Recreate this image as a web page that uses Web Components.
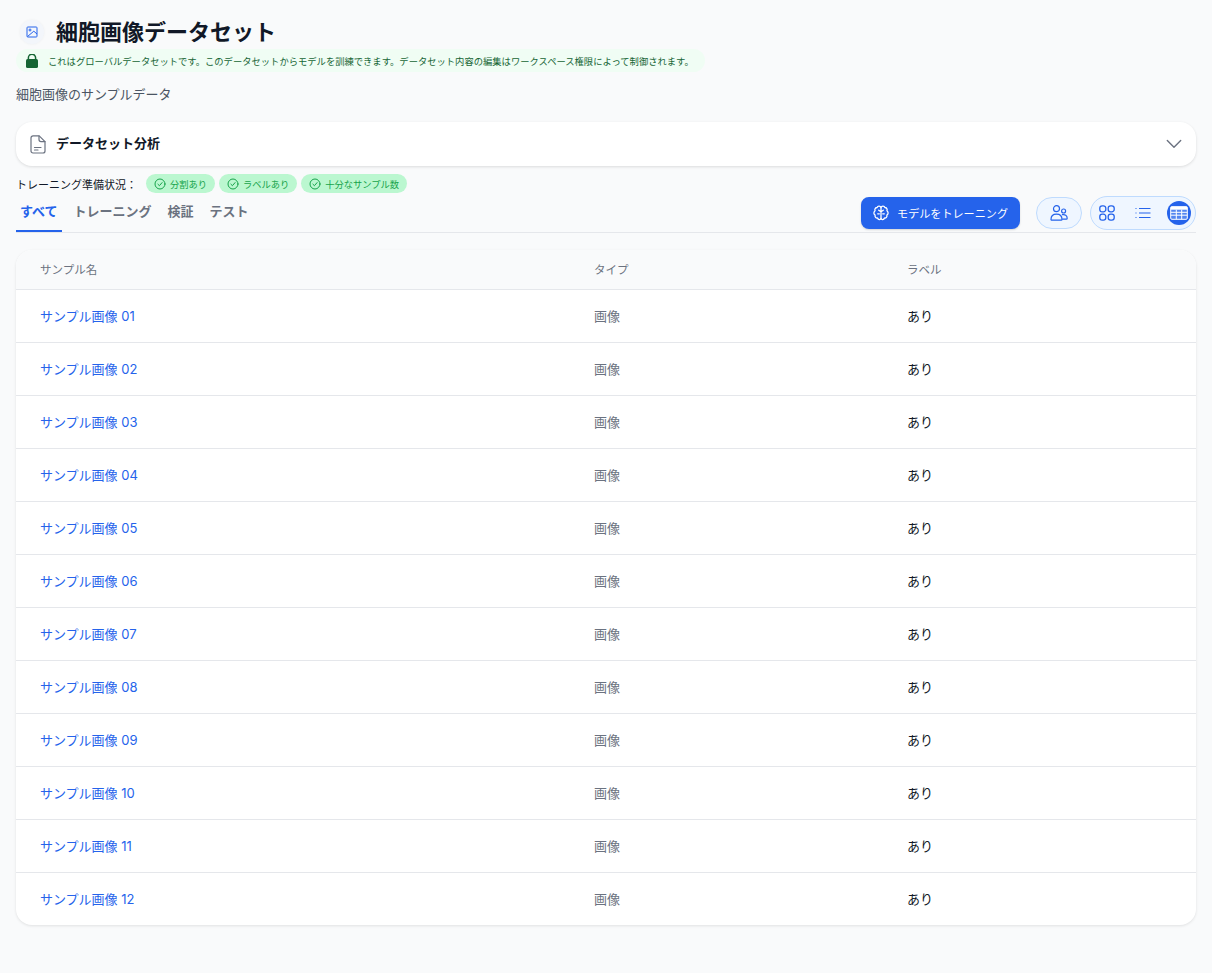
<!DOCTYPE html>
<html lang="ja">
<head>
<meta charset="utf-8">
<title>細胞画像データセット</title>
<style>
html,body{margin:0;padding:0;background:#f9fafb}
body{font-family:Inter,"Noto Sans CJK JP",sans-serif;color:#111827}
</style>
</head>
<body>
<dataset-page></dataset-page>
<script>
const ICONS = {
    image: '<svg width="12" height="12" viewBox="0 0 12 12" fill="none" stroke="#2563eb" stroke-width="1"><rect x="1" y="1" width="10" height="10" rx=".8"/><circle cx="4" cy="4" r="1"/><path d="M1.500 10.500 7.800 5.200 11 8"/></svg>',
    lock: '<svg width="12" height="14" viewBox="0 0 12 14" fill="#166534"><rect x="0" y="5" width="12" height="9" rx="1.600"/><path d="M2.400 6V3.800a3.600 3.600 0 0 1 7.200 0V6" fill="none" stroke="#166534" stroke-width="1.500"/></svg>',
    doc: '<svg width="16" height="19" viewBox="0 0 16 19" fill="none" stroke="#6b7280" stroke-width="1.200" stroke-linejoin="round" stroke-linecap="round"><path d="M3 .9h6.200L15 6.600V16a2 2 0 0 1-2 2H3a2 2 0 0 1-2-2V2.900a2 2 0 0 1 2-2z"/><path d="M9 1v3.600a2 2 0 0 0 2 2h4"/><path d="M4.500 12.500h6.500M4.500 15h3.500"/></svg>',
    chevron: '<svg width="16" height="10" viewBox="0 0 16 10" fill="none" stroke="#6b7280" stroke-width="1.400" stroke-linecap="round" stroke-linejoin="round"><path d="M1.300 1.600 8 8.300l6.700-6.700"/></svg>',
    check: '<svg width="12" height="12" viewBox="0 0 12 12" fill="none" stroke="#16a34a" stroke-width="1" stroke-linecap="round" stroke-linejoin="round"><circle cx="6" cy="6" r="5"/><path d="M3.900 6.200 5.400 7.700 8.100 4.600"/></svg>',
    brain: '<svg width="16" height="16" viewBox="0 0 16 16" fill="none" stroke="#fff" stroke-width="1.300" stroke-linecap="round" stroke-linejoin="round"><path d="M8 2.600C7.400.7 4.700.6 4.100 2.500 2.400 2.500 1.300 4.200 2.100 5.700.5 6.700.5 9.100 2.100 10.100 1.700 11.900 3 13.300 4.500 13 5.200 15 7.500 15.100 8 13.400 8.500 15.100 10.800 15 11.500 13 13 13.300 14.300 11.900 13.900 10.100 15.500 9.100 15.500 6.700 13.900 5.700 14.700 4.200 13.600 2.500 11.900 2.500 11.300.6 8.600.7 8 2.600Z"/><path d="M8 2.600v10.800M8 6.800 5.700 5.200M8 6.800l2.300-1.600M4.700 8.800h1.600M11.300 8.800H9.700"/></svg>',
    users: '<svg width="18" height="16" viewBox="0 0 18 16" fill="none" stroke="#2563eb" stroke-width="1.200" stroke-linecap="round" stroke-linejoin="round"><circle cx="6.500" cy="3.700" r="3"/><circle cx="13.600" cy="6" r="2"/><path d="M1 14.500c0-3.500 2.500-5.300 5.500-5.300s5.500 1.800 5.500 5.300c0 .5-.3.700-.8.700H1.800c-.5 0-.8-.2-.8-.7z"/><path d="M12.400 9.700c2.600-.5 4.800.9 4.800 3.500 0 .6-.3.900-.9.900h-3.700"/></svg>',
    grid: '<svg width="16" height="16" viewBox="0 0 16 16" fill="none" stroke="#2563eb" stroke-width="1.300"><rect x=".8" y=".8" width="6" height="6" rx="2.400"/><rect x="9.200" y=".8" width="6" height="6" rx="2.400"/><rect x=".8" y="9.200" width="6" height="6" rx="2.400"/><rect x="9.200" y="9.200" width="6" height="6" rx="2.400"/></svg>',
    list: '<svg width="16" height="12" viewBox="0 0 16 12" fill="none" stroke="#2563eb" stroke-width="1.200"><path d="M4 1.500h11.500M4 6h11.500M4 10.500h11.500"/><path d="M.5 1.500h1M.5 6h1M.5 10.500h1"/></svg>',
    table: '<svg width="18" height="14" viewBox="0 0 18 14" fill="none" stroke="#fff" stroke-width="1"><rect x=".7" y=".7" width="16.600" height="12.600" rx="1.200" fill="#dbeafe" fill-opacity=".25"/><rect x=".7" y=".7" width="16.600" height="3" fill="#fff" stroke="none"/><path d="M.7 6.300h16.600M.7 9.200h16.600M6.300 3.700v9.600M11.700 3.700v9.600"/></svg>'
};

// base class, every element just hands over its own markup
class ShadowElement extends HTMLElement {
    constructor(){
        super();
        let template = document.createElement('template');
        template.innerHTML = `<style>${this.getStyle()}</style>${this.getTemplate()}`;
        this.attachShadow({mode:'open'}).appendChild(template.content.cloneNode(true));
    }
    getStyle(){ return ':host{display:block}' }
    getTemplate(){ return '<slot></slot>' }
}

class PageHeader extends ShadowElement {
    getStyle(){
        return `
        :host{display:block}
        .title{display:flex;align-items:center;height:24px;padding-left:4px}
        .icon{width:24px;height:24px;border-radius:50%;background:#f3f6fb;display:flex;align-items:center;justify-content:center;box-shadow:0 0 3px rgba(0,0,0,.05)}
        h1{margin:0 0 0 12px;font-size:22px;line-height:24px;font-weight:600;color:#111827}
        .notice{display:flex;align-items:center;width:max-content;height:23px;margin-top:5px;padding:0 11px 0 10px;background:#f0fdf4;border-radius:12px;font-size:9.300px;font-weight:400;color:#166534;gap:10px}
        p{margin:12px 0 0;font-size:13px;line-height:20px;color:#4b5563}
        `
    }
    getTemplate(){
        return `
        <div class="title"><span class="icon">${ICONS.image}</span><h1>細胞画像データセット</h1></div>
        <div class="notice">${ICONS.lock}<span>これはグローバルデータセットです。このデータセットからモデルを訓練できます。データセット内容の編集はワークスペース権限によって制御されます。</span></div>
        <p>細胞画像のサンプルデータ</p>
        `
    }
}

class AnalysisCard extends ShadowElement {
    getStyle(){
        return `
        :host{display:block;margin-top:18px}
        .card{display:flex;align-items:center;height:44px;padding:0 14px;background:#fff;border-radius:16px;box-shadow:0 1px 3px rgba(0,0,0,.12)}
        .doc{display:flex;width:26px}
        b{font-size:13px;line-height:16px;font-weight:600;color:#111827;padding-bottom:2px}
        .chev{margin-left:auto;display:flex}
        `
    }
    getTemplate(){
        return `<div class="card"><span class="doc">${ICONS.doc}</span><b>データセット分析</b><span class="chev">${ICONS.chevron}</span></div>`
    }
}

class ReadyChip extends ShadowElement {
    getStyle(){
        return `
        :host{display:inline-flex;align-items:center;gap:4px;height:19px;padding:0 8px;background:#bbf7d0;border-radius:10px;font-size:9.250px;font-weight:400;color:#16a34a}
        svg{display:block}
        `
    }
    getTemplate(){ return `${ICONS.check}<slot></slot>` }
}

class ReadinessRow extends ShadowElement {
    getStyle(){
        return `
        :host{display:flex;align-items:center;height:19px;margin-top:8px;font-size:11px;font-weight:400;color:#111827}
        span{width:130px;white-space:nowrap}
        .chips{display:flex;gap:4px}
        `
    }
    getTemplate(){
        return `<span>トレーニング準備状況：</span><div class="chips"><slot></slot></div>`
    }
}

class TabBar extends ShadowElement {
    getStyle(){
        return `
        :host{display:flex;align-items:flex-start;height:32px;margin-top:7px;border-bottom:1px solid #e5e7eb;box-sizing:content-box}
        .tabs{display:flex;height:32px}
        .tab{height:32px;box-sizing:border-box;padding:2px 4px 0;margin-right:8px;font-size:13px;line-height:18px;font-weight:600;color:#6b7280}
        .tab.on{color:#2563eb;border-bottom:2px solid #2563eb}
        .actions{margin-left:auto;display:flex;align-items:center;margin-top:-4px}
        .train{display:flex;align-items:center;gap:8px;height:32px;box-sizing:border-box;padding:0 12px;background:#2563eb;color:#fff;border-radius:8px;font-size:11.100px;font-weight:400;box-shadow:0 1px 2px rgba(0,0,0,.15)}
        .pill{display:flex;align-items:center;justify-content:center;height:32px;box-sizing:border-box;background:#eff6ff;border:1px solid #bfdbfe;border-radius:16px}
        .people{width:46px;margin-left:16px}
        .views{width:106px;height:34px;border-radius:17px;margin-left:8px;justify-content:flex-start;padding-left:8px}
        .views span{display:flex;align-items:center;justify-content:center}
        .v1{width:16px}
        .v2{width:16px;margin-left:20px}
        .v3{width:24px;height:24px;margin-left:16px;border-radius:50%;background:#2563eb}
        svg{display:block}
        `
    }
    getTemplate(){
        return `
        <div class="tabs">
            <div class="tab on">すべて</div>
            <div class="tab">トレーニング</div>
            <div class="tab">検証</div>
            <div class="tab">テスト</div>
        </div>
        <div class="actions">
            <div class="train">${ICONS.brain}<span>モデルをトレーニング</span></div>
            <div class="pill people">${ICONS.users}</div>
            <div class="pill views"><span class="v1">${ICONS.grid}</span><span class="v2">${ICONS.list}</span><span class="v3">${ICONS.table}</span></div>
        </div>
        `
    }
}

class SampleTable extends ShadowElement {
    getStyle(){
        return `
        :host{display:block;margin-top:17px;background:#fff;border-radius:16px;box-shadow:0 1px 3px rgba(0,0,0,.1);overflow:hidden}
        .row{display:grid;grid-template-columns:554px 313px 1fr;align-items:center;padding-left:24px;padding-bottom:2px;height:53px;box-sizing:border-box;border-bottom:1px solid #e5e7eb;font-size:13px}
        .row:last-child{border-bottom:0;height:52px}
        .head{height:40px;background:#f9fafb;font-size:11.500px;color:#6b7280;font-weight:400}
        .name{color:#2563eb;font-weight:400}
        .type{color:#6b7280}
        .label{color:#111827}
        `
    }
    getTemplate(){
        let rows = '';
        for (let i = 1; i <= 12; i++){
            let num = String(i).padStart(2, '0');
            rows += `<div class="row"><span class="name">サンプル画像 ${num}</span><span class="type">画像</span><span class="label">あり</span></div>`;
        }
        return `<div class="row head"><span>サンプル名</span><span>タイプ</span><span>ラベル</span></div>${rows}`
    }
}

class DatasetPage extends ShadowElement {
    getStyle(){
        return `:host{display:block;padding:20px 16px 48px;font-family:Inter,"Noto Sans CJK JP",sans-serif}`
    }
    getTemplate(){
        return `
        <page-header></page-header>
        <analysis-card></analysis-card>
        <readiness-row>
            <ready-chip>分割あり</ready-chip>
            <ready-chip>ラベルあり</ready-chip>
            <ready-chip>十分なサンプル数</ready-chip>
        </readiness-row>
        <tab-bar></tab-bar>
        <sample-table></sample-table>
        `
    }
}

window.customElements.define('page-header', PageHeader)
window.customElements.define('analysis-card', AnalysisCard)
window.customElements.define('ready-chip', ReadyChip)
window.customElements.define('readiness-row', ReadinessRow)
window.customElements.define('tab-bar', TabBar)
window.customElements.define('sample-table', SampleTable)
window.customElements.define('dataset-page', DatasetPage)
</script>
</body>
</html>
